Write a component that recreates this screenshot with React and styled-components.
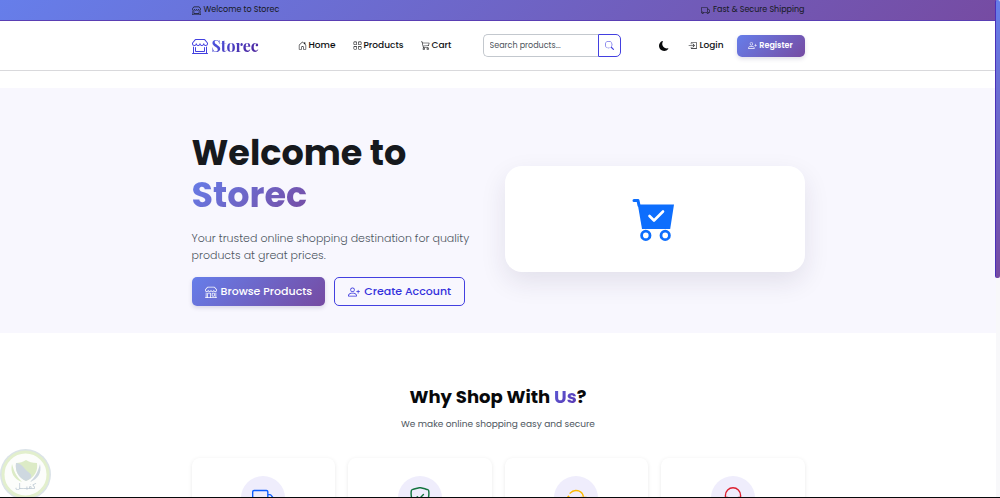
import React from "react";
import styled, { createGlobalStyle, css } from "styled-components";
import {
    BsShop,
    BsTruck,
    BsHouseDoor,
    BsGrid,
    BsCart3,
    BsSearch,
    BsMoonFill,
    BsBoxArrowInRight,
    BsPersonPlus,
    BsShopWindow,
    BsShieldCheck,
    BsArrowRepeat,
    BsHeadset
} from "react-icons/bs";

const gradient = "linear-gradient(135deg, #667eea 0%, #764ba2 100%)";

const GlobalStyle = createGlobalStyle`
    * {
        box-sizing: border-box;
    }

    body {
        margin: 0;
        background: #ffffff;
        color: #16191d;
        font-family: Poppins, Inter, "Open Sans", sans-serif;
        font-size: 9px;
    }

    h1, h2, p {
        margin: 0;
    }

    svg {
        flex-shrink: 0;
    }
`;

const Page = styled.div`
    height: 100vh;
    overflow: hidden;
    padding-right: 4px;
`;

const Container = styled.div`
    width: 100%;
    max-width: 613px;
    margin: 0 auto;
`;

const TopBar = styled.div`
    margin-right: -4px;
    padding-right: 4px;
    background: ${gradient};
    border-bottom: 1px solid #5a3fb4;
`;

const TopBarRow = styled(Container)`
    display: flex;
    justify-content: space-between;
    align-items: center;
    height: 20px;
    font-size: 8px;
`;

const TopBarItem = styled.span`
    display: flex;
    align-items: center;
    gap: 3px;
`;

const Header = styled.header`
    border-bottom: 1px solid #d9d9dc;
`;

const HeaderRow = styled(Container)`
    display: flex;
    align-items: center;
    height: 49px;
`;

const Brand = styled.a`
    display: flex;
    align-items: center;
    gap: 4px;
    width: 106px;
    color: #4340e0;
    text-decoration: none;
    font-family: "Playfair Display", "Liberation Serif", serif;
    font-size: 16px;
    font-weight: 700;
`;

const GradientText = styled.span`
    display: inline-block;
    background: ${props => props.$fill || gradient};
    background-clip: text;
    color: transparent;
`;

const Nav = styled.nav`
    display: flex;
    gap: 17px;
    flex: 1;
`;

const NavLink = styled.a`
    display: flex;
    align-items: center;
    gap: 2px;
    color: #101114;
    text-decoration: none;
    font-size: 9px;
    font-weight: 500;
    white-space: nowrap;
`;

const SearchForm = styled.form`
    display: flex;
    width: 138px;
    height: 23px;
`;

const SearchInput = styled.input`
    flex: 1;
    min-width: 0;
    padding: 0 6px;
    border: 1px solid #c3c8ce;
    border-right: 0;
    border-radius: 5px 0 0 5px;
    background: #ffffff;
    font-family: inherit;
    font-size: 8px;

    &::placeholder {
        color: #4d545c;
        opacity: 1;
    }
`;

const SearchButton = styled.button`
    display: flex;
    align-items: center;
    justify-content: center;
    width: 23px;
    padding: 0;
    border: 1px solid #4340e0;
    border-radius: 0 5px 5px 0;
    background: #ffffff;
    color: #4340e0;
`;

const Account = styled.div`
    display: flex;
    align-items: center;
    justify-content: flex-end;
    width: 184px;
`;

const ThemeButton = styled.button`
    display: flex;
    margin-right: 19px;
    padding: 0;
    border: 0;
    background: none;
    color: #08090b;
`;

const buttonBase = css`
    display: inline-flex;
    align-items: center;
    justify-content: center;
    gap: 4px;
    border-radius: 5px;
    text-decoration: none;
    white-space: nowrap;
`;

const primary = css`
    background: ${gradient};
    color: #ffffff;
    box-shadow: 0 2px 4px rgba(60, 50, 110, 0.16);
`;

const RegisterLink = styled.a`
    ${buttonBase}
    ${primary}
    gap: 2px;
    width: 68px;
    height: 22px;
    margin-left: 13px;
    font-size: 8px;
    font-weight: 600;
`;

const Hero = styled.section`
    margin-top: 17px;
    padding: 44px 0 27px;
    background: #f8f7fe;
`;

const HeroRow = styled(Container)`
    display: grid;
    grid-template-columns: 1fr 1fr;
    gap: 13px;
    align-items: center;
`;

const HeroTitle = styled.h1`
    margin-bottom: 14px;
    font-size: 35px;
    line-height: 42px;
    font-weight: 700;
`;

const HeroText = styled.p`
    margin-bottom: 13px;
    color: #4d565e;
    font-size: 11px;
    line-height: 17px;
    font-weight: 300;
`;

const HeroActions = styled.div`
    display: flex;
    gap: 9px;
`;

const HeroButton = styled.a`
    ${buttonBase}
    height: 29px;
    padding: 0 13px;
    font-size: 11px;
    font-weight: 500;
    ${props =>
        props.$outline
            ? css`
                  border: 1px solid #4340e0;
                  color: #3431dc;
              `
            : primary}
`;

const HeroCard = styled.div`
    display: flex;
    align-items: center;
    justify-content: center;
    height: 106px;
    border-radius: 17px;
    background: #ffffff;
    box-shadow: 0 10px 26px rgba(40, 30, 70, 0.1);
`;

const Features = styled.section`
    padding-top: 53px;
    text-align: center;
`;

const SectionTitle = styled.h2`
    color: #08090b;
    font-size: 18px;
    line-height: 22px;
    font-weight: 700;
`;

const SectionText = styled.p`
    margin: 9px 0 26px;
    color: #4d565e;
    font-size: 9px;
    line-height: 15px;
`;

const FeatureGrid = styled(Container)`
    display: grid;
    grid-template-columns: repeat(4, 1fr);
    gap: 13px;
`;

const FeatureCard = styled.div`
    display: flex;
    justify-content: center;
    padding: 18px 12px;
    min-height: 110px;
    border-radius: 8px;
    background: #ffffff;
    box-shadow: 0 1px 4px rgba(0, 0, 0, 0.09);
`;

const FeatureIcon = styled.div`
    display: flex;
    align-items: center;
    justify-content: center;
    width: 44px;
    height: 44px;
    border-radius: 50%;
    background: #efedfc;
    color: ${props => props.$color};
`;

const ScrollThumb = styled.div`
    position: fixed;
    top: 0;
    right: 0;
    width: 5px;
    height: 278px;
    border-left: 1px solid #4a30b8;
    border-radius: 2px;
    background: linear-gradient(180deg, #667eea, #764ba2);
`;

const ScrollTrack = styled.div`
    position: fixed;
    top: 0;
    right: 0;
    bottom: 0;
    width: 4px;
    background: #f8f8fa;
`;

const BottomEdge = styled.div`
    position: fixed;
    right: 0;
    bottom: 0;
    left: 0;
    height: 1px;
    background: #08090b;
`;

const Badge = styled.div`
    position: fixed;
    bottom: -2px;
    left: 0;
    width: 51px;
    height: 51px;
`;

const BadgeText = styled.span`
    position: absolute;
    top: 33px;
    left: 0;
    right: 0;
    color: #bdc9d3;
    font-family: "DejaVu Sans", sans-serif;
    font-size: 8px;
    line-height: 10px;
    text-align: center;
`;

const CartArt = () => (
    <svg width="46" height="44" viewBox="0 0 46 44" aria-hidden="true">
        <path d="M2 3.5h4l1 5" fill="none" stroke="#0d6efd" strokeWidth="3" strokeLinecap="round" strokeLinejoin="round" />
        <path d="M5.8 7.5H42L38.2 32H10z" fill="#0d6efd" />
        <path d="M17.5 19l4.5 4.5 9-9" fill="none" stroke="#ffffff" strokeWidth="2.6" strokeLinecap="round" strokeLinejoin="round" />
        <circle cx="13.8" cy="38.4" r="4.2" fill="#ffffff" stroke="#0d6efd" strokeWidth="2.8" />
        <circle cx="33.2" cy="38.4" r="4.2" fill="#ffffff" stroke="#0d6efd" strokeWidth="2.8" />
    </svg>
);

const ShieldBadge = () => (
    <Badge>
        <svg width="51" height="51" viewBox="0 0 51 51" aria-hidden="true">
            <circle cx="25.5" cy="25.5" r="25.5" fill="#dbe3e8" />
            <circle cx="25.5" cy="25.5" r="22.5" fill="#fcfdfb" stroke="#e2efcd" strokeWidth="3" />
            <path d="M16 14c4 0 7-1 10-3 3 2 6 3 11 3 1 8-2 14-11 18-8-4-11-10-10-18z" fill="#dcebc6" />
            <path d="M16 14c5 0 7 4 11 8 4 3 5 4 4 7-1 1-3 2-5 3-8-4-11-10-10-18z" fill="#ced8e0" />
            <path d="M12 15c-2 9 2 15 10 18-5-5-8-10-10-18z" fill="#dcebc6" />
            <path d="M40 15c2 9-2 15-10 18 5-5 8-10 10-18z" fill="#ced8e0" />
        </svg>
        <BadgeText lang="ar">كفيــل</BadgeText>
    </Badge>
);

const features = [
    { icon: BsTruck, color: "#0d5efd" },
    { icon: BsShieldCheck, color: "#14743f" },
    { icon: BsArrowRepeat, color: "#fcb900" },
    { icon: BsHeadset, color: "#dc2030" }
];

export default function App() {
    return (
        <Page>
            <GlobalStyle />
            <TopBar>
                <TopBarRow>
                    <TopBarItem>
                        <BsShopWindow size={9} /> Welcome to Storec
                    </TopBarItem>
                    <TopBarItem>
                        <BsTruck size={9} /> Fast &amp; Secure Shipping
                    </TopBarItem>
                </TopBarRow>
            </TopBar>

            <Header>
                <HeaderRow>
                    <Brand href="#">
                        <BsShopWindow size={16} />
                        <GradientText $fill="linear-gradient(135deg, #4a5be8, #4b1d95)">Storec</GradientText>
                    </Brand>
                    <Nav>
                        <NavLink href="#home">
                            <BsHouseDoor size={9} /> Home
                        </NavLink>
                        <NavLink href="#products">
                            <BsGrid size={9} /> Products
                        </NavLink>
                        <NavLink href="#cart">
                            <BsCart3 size={9} /> Cart
                        </NavLink>
                    </Nav>
                    <SearchForm>
                        <SearchInput type="search" aria-label="Search products" placeholder="Search products..." />
                        <SearchButton type="button" aria-label="Search">
                            <BsSearch size={9} />
                        </SearchButton>
                    </SearchForm>
                    <Account>
                        <ThemeButton type="button" aria-label="Dark mode">
                            <BsMoonFill size={10} />
                        </ThemeButton>
                        <NavLink href="#login">
                            <BsBoxArrowInRight size={9} /> Login
                        </NavLink>
                        <RegisterLink href="#register">
                            <BsPersonPlus size={9} /> Register
                        </RegisterLink>
                    </Account>
                </HeaderRow>
            </Header>

            <Hero>
                <HeroRow>
                    <div>
                        <HeroTitle>
                            Welcome to
                            <br />
                            <GradientText>Storec</GradientText>
                        </HeroTitle>
                        <HeroText>
                            Your trusted online shopping destination for quality products at great prices.
                        </HeroText>
                        <HeroActions>
                            <HeroButton href="#products">
                                <BsShop size={12} /> Browse Products
                            </HeroButton>
                            <HeroButton href="#register" $outline>
                                <BsPersonPlus size={12} /> Create Account
                            </HeroButton>
                        </HeroActions>
                    </div>
                    <HeroCard>
                        <CartArt />
                    </HeroCard>
                </HeroRow>
            </Hero>

            <Features>
                <SectionTitle>
                    Why Shop With <GradientText $fill="linear-gradient(135deg, #5b5bd6, #5a35b0)">Us</GradientText>?
                </SectionTitle>
                <SectionText>We make online shopping easy and secure</SectionText>
                <FeatureGrid>
                    {features.map(({ icon: Icon, color }) => (
                        <FeatureCard key={color}>
                            <FeatureIcon $color={color}>
                                <Icon size={22} />
                            </FeatureIcon>
                        </FeatureCard>
                    ))}
                </FeatureGrid>
            </Features>

            <ShieldBadge />
            <ScrollTrack />
            <ScrollThumb />
            <BottomEdge />
        </Page>
    );
}
